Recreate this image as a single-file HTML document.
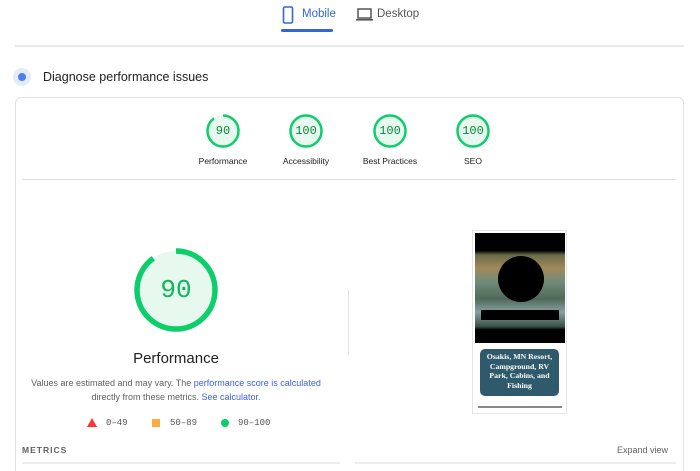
<!DOCTYPE html>
<html><head><meta charset="utf-8"><style>
*{margin:0;padding:0;box-sizing:border-box}
html,body{width:700px;height:471px;overflow:hidden}
body{background:#fff;font-family:"Liberation Sans",sans-serif;position:relative;color:#212121}
.a{position:absolute}
.mono{font-family:"Liberation Mono",monospace}
.lbl{font-size:8.5px;color:#212121;text-align:center;width:80px}
</style></head><body>
<svg class="a" style="left:282px;top:6px" width="12" height="18" viewBox="0 0 12 18"><rect x="1.5" y="1" width="9" height="16" rx="1.5" fill="none" stroke="#3367d6" stroke-width="1.6"/></svg>
<div class="a" style="left:302px;top:8px;font-size:11.5px;color:#3367d6">Mobile</div>
<div class="a" style="left:281px;top:29px;width:52px;height:3px;background:#3367d6;border-radius:2px"></div>
<svg class="a" style="left:356px;top:8px" width="17" height="14" viewBox="0 0 17 14"><rect x="2" y="1" width="13" height="9" fill="none" stroke="#555" stroke-width="1.5"/><rect x="0" y="11" width="17" height="1.6" fill="#555"/></svg>
<div class="a" style="left:377px;top:8px;font-size:11.5px;color:#555">Desktop</div>
<div class="a" style="left:15px;top:45px;width:669px;height:2px;background:#e8e8e8"></div>
<div class="a" style="left:13px;top:68px;width:18px;height:18px;border-radius:50%;background:#e3ecfb"></div>
<div class="a" style="left:18px;top:73px;width:8px;height:8px;border-radius:50%;background:#4a80e8"></div>
<div class="a" style="left:43px;top:70px;font-size:12.5px;color:#212121">Diagnose performance issues</div>
<div class="a" style="left:15px;top:97px;width:669px;height:390px;border:1px solid #e0e0e0;border-radius:6px"></div>
<svg class="a" style="left:0;top:0" width="700" height="471">
<g fill="#e7f8ee" stroke="#0cce6b" stroke-width="2.5">
<circle cx="306" cy="131" r="15.5"/><circle cx="390" cy="131" r="15.5"/><circle cx="473" cy="131" r="15.5"/>
<circle cx="223" cy="131" r="15.5" stroke="none"/>
</g>
<circle cx="223" cy="131" r="15.5" fill="none" stroke="#0cce6b" stroke-width="2.5" stroke-dasharray="87.6 97.4" transform="rotate(-90 223 131)"/>
<circle cx="176" cy="290" r="39" fill="#e7f8ee"/>
<circle cx="176" cy="290" r="39" fill="none" stroke="#0cce6b" stroke-width="5.5" stroke-dasharray="220.5 245" transform="rotate(-90 176 290)"/>
<polygon points="92,418 97,427 87,427" fill="#f33"/>
<rect x="152" y="419" width="8" height="8" fill="#ffa940"/>
<circle cx="225" cy="423" r="4" fill="#0cce6b"/>
</svg>
<div class="a mono" style="left:203px;top:124px;width:40px;text-align:center;font-size:12px;color:#0a8a3a">90</div>
<div class="a mono" style="left:286px;top:124px;width:40px;text-align:center;font-size:12px;color:#0a8a3a">100</div>
<div class="a mono" style="left:370px;top:124px;width:40px;text-align:center;font-size:12px;color:#0a8a3a">100</div>
<div class="a mono" style="left:453px;top:124px;width:40px;text-align:center;font-size:12px;color:#0a8a3a">100</div>
<div class="a lbl" style="left:183px;top:156px">Performance</div>
<div class="a lbl" style="left:266px;top:156px">Accessibility</div>
<div class="a lbl" style="left:350px;top:156px">Best Practices</div>
<div class="a lbl" style="left:433px;top:156px">SEO</div>
<div class="a" style="left:22px;top:179px;width:654px;height:1px;background:#e0e0e0"></div>
<div class="a mono" style="left:136px;top:275px;width:80px;text-align:center;font-size:26px;color:#0cb85c">90</div>
<div class="a" style="left:76px;top:350px;width:200px;text-align:center;font-size:15px;color:#212121">Performance</div>
<div class="a" style="left:16px;top:376px;width:320px;text-align:center;font-size:9px;line-height:14px;color:#616161">Values are estimated and may vary. The <span style="color:#3c5ee6">performance score is calculated</span><br>directly from these metrics. <span style="color:#3c5ee6">See calculator.</span></div>
<div class="a mono" style="left:106px;top:418px;font-size:9px;color:#555">0–49</div>
<div class="a mono" style="left:170px;top:418px;font-size:9px;color:#555">50–89</div>
<div class="a mono" style="left:238px;top:418px;font-size:9px;color:#555">90–100</div>
<div class="a" style="left:348px;top:290px;width:1px;height:65px;background:#e0e0e0"></div>
<div class="a" style="left:22px;top:445px;font-size:8.5px;font-weight:bold;letter-spacing:1px;color:#616161">METRICS</div>
<div class="a" style="left:617px;top:445px;font-size:9px;color:#616161">Expand view</div>
<div class="a" style="left:22px;top:462px;width:318px;height:2px;background:#eee"></div>
<div class="a" style="left:355px;top:462px;width:321px;height:2px;background:#eee"></div>
<div class="a" style="left:472px;top:230px;width:95px;height:184px;border:1px solid #e4e4e4;background:#fff"></div>
<div class="a" style="left:475px;top:233px;width:90px;height:110px;background:linear-gradient(#000 0,#000 16%,#6b6a4a 20%,#a08a5a 32%,#6f8a7a 45%,#4f6a5a 60%,#8aa0a0 72%,#3a5048 85%,#000 88%,#000 100%)"></div>
<div class="a" style="left:498px;top:256px;width:46px;height:46px;border-radius:50%;background:#000"></div>
<div class="a" style="left:481px;top:310px;width:78px;height:10px;background:#000"></div>
<div class="a" style="left:480px;top:349px;width:79px;height:47px;border-radius:5px;background:#2f5a6b;color:#fff;font-family:'Liberation Serif',serif;font-weight:bold;font-size:7.8px;line-height:9.5px;text-align:center;padding-top:3px">Osakis, MN Resort, Campground, RV Park, Cabins, and Fishing</div>
<div class="a" style="left:478px;top:406px;width:84px;height:2px;background:#888"></div>
</body></html>
